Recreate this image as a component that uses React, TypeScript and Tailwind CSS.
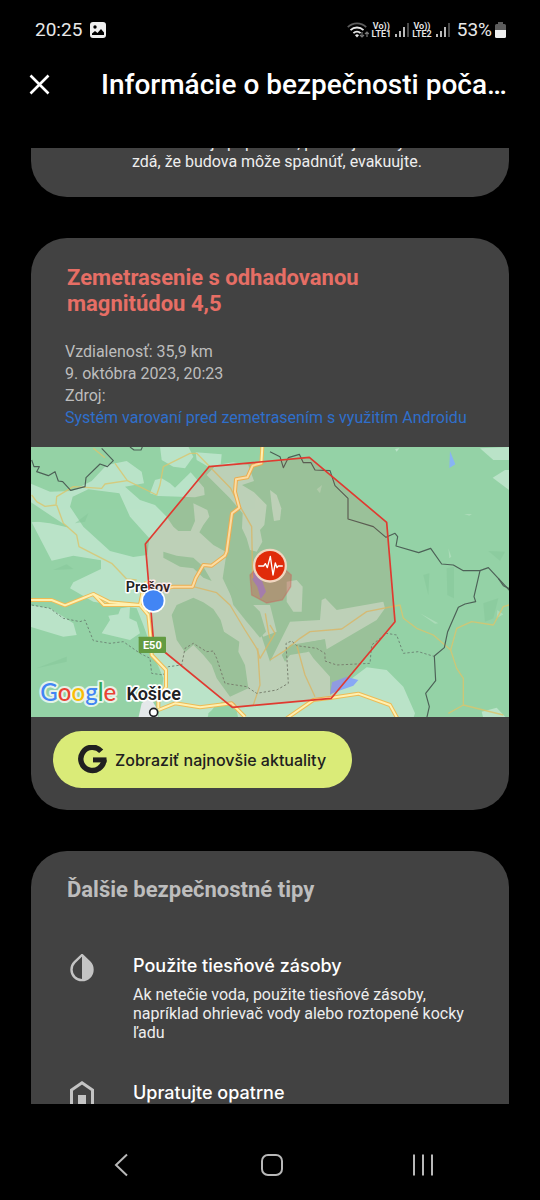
import type { ReactNode } from 'react';

const FOREST = '#94d2a6';
const FIELD = '#bae3c8';

const fields = [
  // valley west and south of Prešov
  'M0 115 60 140 125 138 185 108 230 60 290 48 335 80 342 115 285 125 330 165 375 180 410 215 430 245 445 258 482 258 495 228 490 175 532 195 538 215 520 240 508 262 550 300 590 322 578 400 610 468 690 500 690 560 720 650 780 530 870 525 875 465 886 460 920 495 1060 470 1065 490 1040 525 890 613 885 583 820 595 850 640 900 695 900 750 1010 667 1070 675 1120 725 1155 805 1150 820 610 820 610 780 560 775 530 820 385 820 400 700 375 640 340 540 320 490 190 470 120 430 130 412 213 372 213 346 130 332 65 347 5 232 45 228 110 245 60 215 0 175Z',
  'M390 5 475 5 490 35 465 70 430 65 395 45Z',
  'M497 22 575 28 572 60 540 68 500 45Z',
  'M360 145 375 105 395 100 420 115 435 128 482 82 522 128 524 150 495 157 385 153Z',
  'M558 60 610 52 655 60 672 108 636 120 672 142 710 180 703 240 690 255 697 290 680 320 660 315 650 280 636 250 638 205 600 160 570 130 530 90Z',
  'M0 480 60 490 130 535 140 570 100 575 0 545Z',
  'M215 565 240 525 235 512 265 508 272 490 300 485 298 520 320 530 330 565 300 585 272 578Z',
  'M650 480 720 480 740 560 700 575Z',
  'M770 410 800 405 818 425 815 500 790 500 770 470Z',
  'M1350 10 1390 45 1437 45 1437 6Z',
  'M1388 98 1425 75 1437 75 1437 135Z',
  'M1355 800 1400 788 1430 820 1360 820Z',
  'M720 135 740 150 754 190 750 225 732 228 726 190Z',
  'M1095 12 1108 10 1100 20Z',
];

const forests = [
  'M128 155 175 133 268 145 300 215 358 280 352 330 310 336 240 318 160 245 120 185Z',
  'M400 320 440 332 490 338 520 365 545 408 520 398 490 370 450 365 400 338Z',
  'M425 510 440 480 490 458 520 472 550 492 572 525 582 560 628 590 625 620 645 660 655 730 600 755 560 700 545 660 520 630 490 600 465 622 440 585Z',
  'M590 400 640 450 690 500 708 560 690 578 650 530 610 480Z',
  'M535 805 575 770 615 775 625 820 535 820Z',
  'M755 630 780 600 885 583 870 610 830 622 780 630 765 650Z',
  'M0 170 60 210 118 248 60 235 5 228Z',
];

const highways = [
  'M697 6 694 55 668 62 652 97 618 103 615 140 628 188 606 205 590 320 585 332 545 362 520 360 497 400 488 425 430 425 370 440',
  'M0 465 65 465 105 481 190 447 222 480 330 480 355 510 362 580 365 630 408 675 408 725 385 765 385 790',
  'M190 447 240 472 330 480 338 440 350 410',
  'M385 795 435 775 510 787 605 775 645 816',
  'M770 820 850 765 905 758 985 746 1080 780 1102 820',
];

const roads = [
  'M190 10 225 38 M255 55 292 107 225 117 215 130 130 125 80 155 78 180 45 184 20 170 5 150 M80 180 100 235 140 270 147 305 245 355 290 402 320 405',
  'M292 107 380 150 390 120 400 65 480 25 500 25 602 130 625 175 665 245 668 400',
  'M490 425 560 443 600 480 645 555 680 610 690 640 735 565 720 540',
  'M683 610 690 720 670 780',
  'M720 645 760 620 810 580 840 560 935 552 1010 500 1110 480 1120 520 1160 550 1210 570 1262 615 1280 670 1300 700 1300 780 1255 805 M1300 780 1420 810',
  'M800 600 825 690 855 755',
  'M1262 615 1280 550 1325 530 1390 540 1420 485 1437 480',
  'M706 505 715 560 720 580',
];

const borders = [
  'M5 45 12 65 28 65 20 80 55 92 75 80 85 108 98 110 122 136 165 125 168 98 210 57 232 65 250 47 215 10',
  'M300 6 312 15 333 15 337 6',
  'M720 20 750 35 760 68 775 38 808 28 820 53 843 53 855 75 900 77 915 122 954 160 954 222 1030 245 1068 277 1095 265 1103 275 1098 303 1166 323 1202 310 1235 357 1270 360 1300 377 1350 377 1375 368 1440 438',
  'M1350 377 1332 455 1337 470 1305 477 1285 487 1253 560 1243 608 1213 633 1217 707 1187 745 1198 785 1190 820',
  'M1405 400 1420 422 1440 432',
];

const district =
  'M5 480 60 490 100 520 150 530 165 525 190 587 240 595 280 590 330 625 360 640 365 685 400 690 415 665 455 660 465 610 490 595 530 620 550 618 560 640 585 715 650 725 680 745 740 735 775 715 768 595 785 588 800 602 860 610 885 625 885 648 920 660 1020 655 1025 600 1070 565 1100 570 1120 625 1165 620 1215 635';

function QuakeMap() {
  return (
    <svg viewBox="3 6 1434 810" className="block h-auto w-full" role="img" aria-label="Mapa zemetrasenia">
      <rect x="0" y="0" width="1440" height="820" fill={FOREST} />
      {fields.map((d) => (
        <path key={d} d={d} fill={FIELD} />
      ))}
      {forests.map((d) => (
        <path key={d} d={d} fill={FOREST} />
      ))}

      {/* relief */}
      <g fill="#86c79a" opacity="0.5">
        <path d="M135 235 175 205 165 230Z" />
        <path d="M70 375 110 358 130 372Z" />
        <path d="M20 670 110 635 110 650Z" />
        <path d="M1375 318 1425 320 1410 347Z" />
        <path d="M1250 370 1272 365 1272 460 1252 450Z" />
        <path d="M1360 475 1405 460 1390 520 1365 530Z" />
        <path d="M1180 390 1198 385 1195 450Z" />
      </g>
      <g fill="#b5e0c0" opacity="0.7">
        <path d="M860 133 876 120 870 145Z" />
        <path d="M1302 207 1326 207 1318 212Z" />
        <path d="M1255 310 1264 335 1258 340Z" />
        <path d="M1400 520 1402 495 1420 508Z" />
        <path d="M1170 505 1225 535 1215 536Z" />
      </g>

      {/* water */}
      <path d="M900 748 906 712 950 695 985 705 970 722 925 738Z" fill="#88a8f5" />
      <path d="M1260 18 1276 58 1258 69Z" fill="#88b4f4" />
      <path d="M668 380 690 390 708 440 692 462 682 425 668 405Z" fill="#88a8f5" />
      <path d="M335 775 360 755 380 790 385 820 325 820Z" fill="#e4e8ea" />

      <g fill="none" stroke="#dcc56c" strokeWidth="4" strokeLinejoin="round" opacity="0.8">
        {roads.map((d) => (
          <path key={d} d={d} />
        ))}
      </g>
      <path d={district} fill="none" stroke="#6f8a78" strokeWidth="3" strokeDasharray="7 6" />
      <g fill="none" stroke="#4d6157" strokeWidth="3.5" strokeLinejoin="round">
        {borders.map((d) => (
          <path key={d} d={d} />
        ))}
      </g>
      <g fill="none" strokeLinejoin="round">
        {highways.map((d) => (
          <path key={d} d={d} stroke="#eebb55" strokeWidth="12" />
        ))}
        {highways.map((d) => (
          <path key={d} d={d} stroke="#fff0b0" strokeWidth="6" />
        ))}
      </g>

      {/* city labels under the shaken area */}
      <text
        x="354"
        y="441"
        textAnchor="middle"
        className="font-['Roboto'] text-[43px] font-semibold"
        fill="#202124"
        stroke="#ffffff"
        strokeWidth="9"
        strokeLinejoin="round"
        paintOrder="stroke"
      >
        Prešov
      </text>

      {/* shaken area */}
      <path
        d="M537 65 838 37 1070 232 1095 530 904 760 607 787 371 594 346 297Z"
        fill="#d93025"
        fillOpacity="0.1"
        stroke="#e03a30"
        strokeWidth="5"
        strokeLinejoin="round"
      />
      <path
        d="M660 390 685 365 755 365 784 390 782 425 757 465 710 474 665 450Z"
        fill="#d93025"
        fillOpacity="0.28"
        stroke="#d0605a"
        strokeOpacity="0.4"
        strokeWidth="4"
      />
      <circle cx="720" cy="362" r="51" fill="#f0d6c0" />
      <circle cx="720" cy="362" r="44" fill="#e02b0a" />
      <path
        d="M686 363h15l5-7 6 12 9-34 8 56 7-36 5 14 4-5h12"
        fill="none"
        stroke="#fff"
        strokeWidth="4"
        strokeLinejoin="round"
        strokeLinecap="round"
      />

      {/* road shield */}
      <rect x="326" y="575" width="82" height="49" rx="2" fill="#629b41" />
      <text x="367" y="611" textAnchor="middle" className="font-['Roboto'] text-[33px] font-bold" fill="#fff">
        E50
      </text>

      {/* my location */}
      <circle cx="370" cy="467" r="36" fill="#fff" />
      <circle cx="370" cy="467" r="31" fill="#4285f4" />

      <circle cx="371" cy="802" r="12" fill="#fff" stroke="#202124" strokeWidth="5" />
      <text
        x="371"
        y="766"
        textAnchor="middle"
        className="font-['Roboto'] text-[54px] font-semibold"
        fill="#202124"
        stroke="#ffffff"
        strokeWidth="10"
        strokeLinejoin="round"
        paintOrder="stroke"
      >
        Košice
      </text>
      <text
        x="31"
        y="768"
        className="font-['Lato'] text-[72px] font-medium"
        stroke="#ffffff"
        strokeOpacity="0.75"
        strokeWidth="12"
        strokeLinejoin="round"
        paintOrder="stroke"
      >
        <tspan fill="#4285f4">G</tspan>
        <tspan fill="#ea4335">o</tspan>
        <tspan fill="#fbbc05">o</tspan>
        <tspan fill="#4285f4">g</tspan>
        <tspan fill="#34a853">l</tspan>
        <tspan fill="#ea4335">e</tspan>
      </text>
    </svg>
  );
}

function SimSignal({ label }: { label: string }) {
  return (
    <div className="flex items-center gap-1">
      <div className="flex flex-col items-center text-[9px] leading-[8px] font-semibold">
        <span>Vo))</span>
        <span>{label}</span>
      </div>
      <svg width="14" height="16" viewBox="0 0 14 16" fill="none" strokeWidth="1.6">
        <path d="M1 12v3M5 9v6M9 5v10" stroke="#e8e8e8" />
        <path d="M13 1v14" stroke="#5c5c5c" />
      </svg>
    </div>
  );
}

function StatusBar() {
  return (
    <div className="flex h-[60px] shrink-0 items-center justify-between pr-[34px] pl-[35px] text-[#e8e8e8]">
      <div className="flex items-center gap-2 text-[19px]">
        <span>20:25</span>
        <svg width="16" height="16" viewBox="0 0 16 16">
          <rect width="16" height="16" rx="3" fill="#f0f0f0" />
          <circle cx="5" cy="5" r="1.7" fill="#000" />
          <path d="M2 13V11.5L5 9l2.500 2L11 7l3 3.500V13Z" fill="#000" />
        </svg>
      </div>
      <div className="flex items-center gap-[3px]">
        <svg width="22" height="17" viewBox="0 0 22 17" fill="none" strokeWidth="1.8">
          <path d="M.8 5.200a13 13 0 0 1 18.400 0" stroke="#5c5c5c" />
          <path d="M3.500 8.200a9.200 9.200 0 0 1 13 0M6.400 11.200a5.200 5.200 0 0 1 7.200 0" stroke="#e8e8e8" />
          <path d="M10 15.500l-2-2.300a3 3 0 0 1 4 0Z" fill="#e8e8e8" />
          <path d="M15 10v5m-2-2 2 2 2-2M20 15v-5m-2 2 2-2 2 2" stroke="#777" strokeWidth="1.200" />
        </svg>
        <SimSignal label="LTE1" />
        <SimSignal label="LTE2" />
        <span className="ml-1 text-[19px]">53%</span>
        <svg width="11" height="16" viewBox="0 0 11 16">
          <path d="M3 0h5v2h1.500A1.500 1.500 0 0 1 11 3.500V9H0V3.500A1.500 1.500 0 0 1 1.500 2H3Z" fill="#5c5c5c" />
          <path d="M0 8h11v6.500a1.500 1.500 0 0 1-1.500 1.500h-8A1.500 1.500 0 0 1 0 14.500Z" fill="#f0f0f0" />
        </svg>
      </div>
    </div>
  );
}

function Tip({ icon, title, children }: { icon: ReactNode; title: string; children?: ReactNode }) {
  return (
    <li className="flex gap-9">
      <div className="w-[30px] shrink-0 text-[#c4c4c4]">{icon}</div>
      <div className="min-w-0 flex-1">
        <h3 className="font-['Inter',sans-serif] text-[18px] leading-6 font-medium text-white">{title}</h3>
        <p className="mt-[7px] text-base leading-[19px] text-[#eeeeee]">{children}</p>
      </div>
    </li>
  );
}

export default function App() {
  return (
    <div className="flex h-screen flex-col bg-black font-['Roboto',sans-serif] text-white">
      <StatusBar />
      <header className="flex h-[88px] shrink-0 items-start gap-[50px] pr-[31px] pl-[28px]">
        <button type="button" aria-label="Zavrieť" className="flex h-12 shrink-0 items-center">
          <svg width="23" height="23" viewBox="0 0 23 23" fill="none" stroke="#fff" strokeWidth="2.600">
            <path d="M2.500 2.500l18 18M20.500 2.500l-18 18" />
          </svg>
        </button>
        <h1 className="min-w-0 flex-1 truncate text-[28px] leading-[50px] font-medium">
          Informácie o bezpečnosti počas zemetrasenia
        </h1>
      </header>

      <main className="flex min-h-0 flex-1 flex-col gap-[41px] overflow-hidden px-[31px]">
        <section className="-mt-[15px] shrink-0 rounded-b-[36px] bg-[#424242] pr-8 pb-[26px] pl-[101px]">
          <p className="text-base leading-[19px] text-[#eeeeee]">
            Ak budova je popukaná, praskajú múry a
            <br />
            zdá, že budova môže spadnúť, evakuujte.
          </p>
        </section>

        <section className="shrink-0 overflow-hidden rounded-[36px] bg-[#424242] pb-[22px]">
          <h2 className="px-9 pt-[27px] text-[22px] leading-[26px] font-bold text-[#e66e65]">
            Zemetrasenie s odhadovanou
            <br />
            magnitúdou 4,5
          </h2>
          <div className="mt-[24px] mb-[18px] px-[34px] text-base leading-[22px] text-[#bdbdbd]">
            <p>Vzdialenosť: 35,9 km</p>
            <p>9. októbra 2023, 20:23</p>
            <p>Zdroj:</p>
            <a href="#" className="text-[#2f6fcb]">
              Systém varovaní pred zemetrasením s využitím Androidu
            </a>
          </div>
          <QuakeMap />
          <button
            type="button"
            className="mt-[14px] ml-[22px] flex h-[57px] items-center gap-2 rounded-full bg-[#daeb78] pr-[26px] pl-[25px] font-['Inter',sans-serif] text-base font-medium text-[#202020]"
          >
            <svg width="29" height="29" viewBox="0 0 29 29" fill="none" stroke="#202020" strokeWidth="5.400">
              <path d="M23.200 6.300A11.600 11.600 0 1 0 26 14.500" />
              <path d="M15 14.900H28.500" strokeWidth="5" />
            </svg>
            Zobraziť najnovšie aktuality
          </button>
        </section>

        <section className="shrink-0 rounded-[36px] bg-[#424242] px-9 pt-[26px] pb-9">
          <h2 className="text-[22px] leading-[26px] font-bold text-[#bdbdbd]">Ďalšie bezpečnostné tipy</h2>
          <ul className="mt-[51px] flex flex-col gap-[39px]">
            <Tip
              title="Použite tiesňové zásoby"
              icon={
                <svg width="30" height="28" viewBox="0 0 30 28">
                  <path d="M15 2 7.600 9.200a10.500 10.500 0 1 0 14.800 0Z" fill="none" stroke="currentColor" strokeWidth="2.400" transform="translate(0 -1)" />
                  <path d="M15 1 22.400 8.200A10.500 10.500 0 0 1 15 26Z" fill="currentColor" />
                </svg>
              }
            >
              Ak netečie voda, použite tiesňové zásoby, napríklad ohrievač vody alebo roztopené kocky ľadu
            </Tip>
            <Tip
              title="Upratujte opatrne"
              icon={
                <svg width="30" height="28" viewBox="0 0 30 28" fill="none" stroke="currentColor" strokeWidth="3">
                  <path d="M4.500 26V9L15 1.800 25.500 9V26Z" />
                  <path d="M11 14h8v12h-8Z" fill="currentColor" stroke="none" />
                </svg>
              }
            >
              Používajte ochranné rukavice a pevnú obuv
            </Tip>
          </ul>
        </section>
      </main>

      <nav className="flex h-24 shrink-0 items-start justify-around pt-[49px] pr-[42px] pl-[45px]">
        <button type="button" aria-label="Späť">
          <svg width="24" height="24" viewBox="0 0 24 24" fill="none" stroke="#b8b8b8" strokeWidth="2">
            <path d="M18 1.500 7 12l11 10.500" />
          </svg>
        </button>
        <button type="button" aria-label="Domov">
          <svg width="24" height="24" viewBox="0 0 24 24" fill="none" stroke="#b8b8b8" strokeWidth="2">
            <rect x="2" y="2" width="20" height="20" rx="6" />
          </svg>
        </button>
        <button type="button" aria-label="Posledné aplikácie">
          <svg width="24" height="24" viewBox="0 0 24 24" fill="none" stroke="#b8b8b8" strokeWidth="2">
            <path d="M3 1.500v21M12 1.500v21M21 1.500v21" />
          </svg>
        </button>
      </nav>
    </div>
  );
}
